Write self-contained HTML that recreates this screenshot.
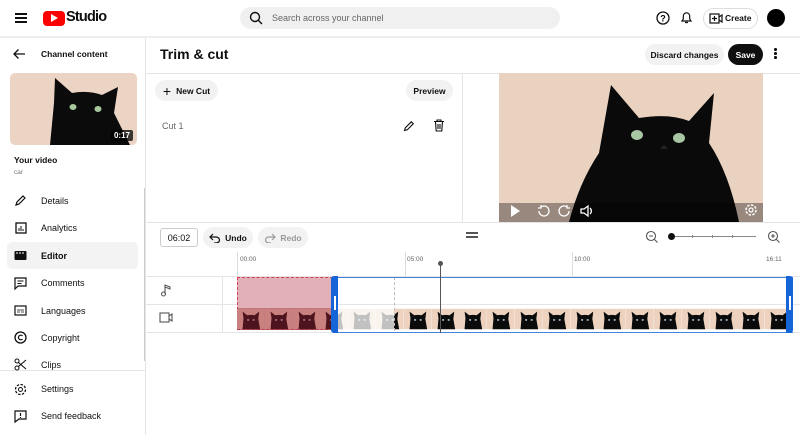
<!DOCTYPE html>
<html><head><style>
*{margin:0;padding:0;box-sizing:border-box}
body{width:800px;height:435px;overflow:hidden;background:#fff;font-family:"Liberation Sans",Arial,sans-serif;color:#0f0f0f;position:relative}
.a{position:absolute}
.t{font-size:9px}
.b{font-weight:bold}
.pill{position:absolute;border-radius:14px;background:#f2f2f2;font-size:8.5px;font-weight:bold;display:flex;align-items:center;justify-content:center}
.nav{position:absolute;left:14px;font-size:9px;display:flex;align-items:center}
.nav span{position:absolute;left:27px;top:0;white-space:nowrap}
</style></head><body>
<svg width="0" height="0" style="position:absolute"><defs>
<symbol id="cat" viewBox="0 0 30 22"><rect width="30" height="22" fill="#ecd2bf"/><path d="M6 22 L7 10 L6 3 L11 7 Q15 6 19 7 L24 3 L23 11 L25 22Z" fill="#0b0b0b"/><circle cx="12" cy="12" r="1.2" fill="#9ab"/><circle cx="18" cy="12" r="1.2" fill="#9ab"/></symbol>
</defs></svg>

<!-- header -->
<div class="a" style="left:15px;top:13px;width:12px;height:2px;background:#0f0f0f;box-shadow:0 4px 0 #0f0f0f,0 8px 0 #0f0f0f"></div>
<div class="a" style="left:43px;top:11px;width:22px;height:15px;background:#f00;border-radius:4px"></div>
<div class="a" style="left:51px;top:14px;width:0;height:0;border-left:7px solid #fff;border-top:4.5px solid transparent;border-bottom:4.5px solid transparent"></div>
<div class="a b" style="left:66px;top:9px;font-size:14.5px;letter-spacing:-0.8px">Studio</div>
<div class="a" style="left:240px;top:7px;width:320px;height:22px;background:#f0f0f0;border-radius:11px"></div>
<svg class="a" style="left:249px;top:11px" width="14" height="14" viewBox="0 0 14 14"><circle cx="6" cy="6" r="4.5" fill="none" stroke="#0f0f0f" stroke-width="1.4"/><path d="M9.3 9.3L13 13" stroke="#0f0f0f" stroke-width="1.4"/></svg>
<div class="a t" style="left:272px;top:13px;color:#666">Search across your channel</div>
<svg class="a" style="left:656px;top:11px" width="14" height="14"><circle cx="7" cy="7" r="6" fill="none" stroke="#0f0f0f" stroke-width="1.3"/><text x="4.3" y="10.5" font-size="9" font-weight="bold" font-family="Liberation Sans">?</text></svg>
<svg class="a" style="left:680px;top:10px" width="13" height="15"><path d="M2 11h9l-1.3-2V6a3.2 3.2 0 0 0-6.4 0v3Z M5 12.5h3" fill="none" stroke="#0f0f0f" stroke-width="1.2"/></svg>
<div class="a" style="left:703px;top:8px;width:55px;height:21px;border:1px solid #ddd;border-radius:11px"></div>
<svg class="a" style="left:709px;top:13px" width="14" height="11"><rect x="1" y="1" width="9" height="9" fill="none" stroke="#0f0f0f" stroke-width="1.2"/><path d="M10 4l3-2v7l-3-2" fill="none" stroke="#0f0f0f" stroke-width="1.2"/><path d="M5.5 3v5M3 5.5h5" stroke="#0f0f0f" stroke-width="1.2"/></svg>
<div class="a b" style="left:725px;top:13px;font-size:8.5px">Create</div>
<div class="a" style="left:767px;top:9px;width:18px;height:18px;border-radius:50%;background:#000"></div>
<div class="a" style="left:0;top:36px;width:800px;height:2px;background:#eee"></div>

<!-- sidebar -->
<svg class="a" style="left:12px;top:48px" width="14" height="12"><path d="M13 6H2M6.5 1.5L2 6l4.5 4.5" fill="none" stroke="#0f0f0f" stroke-width="1.3"/></svg>
<div class="a b" style="left:41px;top:49px;font-size:8.5px">Channel content</div>
<div class="a" style="left:10px;top:73px;width:127px;height:72px;border-radius:5px;overflow:hidden;background:#ecd4c4">
 <svg width="127" height="72" viewBox="0 0 127 72"><path d="M40 72 L44 30 L45 5 L62 20 Q78 17 92 22 L108 14 L104 40 L120 72Z" fill="#0b0b0b"/><ellipse cx="63" cy="34" rx="3.5" ry="3" fill="#a9c79d"/><ellipse cx="88" cy="36" rx="3.5" ry="3" fill="#a9c79d"/></svg>
 <div class="a b" style="right:4px;bottom:4px;background:rgba(0,0,0,.75);color:#fff;font-size:8px;padding:1px 3px;border-radius:2px">0:17</div>
</div>
<div class="a b" style="left:14px;top:155px;font-size:8.5px">Your video</div>
<div class="a" style="left:14px;top:169px;font-size:6.5px;color:#777">car</div>
<div class="a" style="left:7px;top:242px;width:131px;height:27px;background:#f3f3f3;border-radius:5px"></div>
<div class="a" style="left:144px;top:188px;width:2px;height:173px;background:#ccc"></div>
<div class="a" style="left:145px;top:38px;width:1px;height:397px;background:#e5e5e5"></div>
<div class="a" style="left:0;top:370px;width:145px;height:1px;background:#e5e5e5"></div>

<svg class="a" style="left:14px;top:194px" width="13" height="13"><path d="M2 11l1-3 6-6 2 2-6 6z" fill="none" stroke="#0f0f0f" stroke-width="1.2"/></svg>
<div class="nav" style="top:196px"><span>Details</span></div>
<svg class="a" style="left:15px;top:222px" width="12" height="12"><rect x="1" y="1" width="10" height="10" fill="none" stroke="#0f0f0f" stroke-width="1.3"/><path d="M4 9V6M6 9V4M8 9V7" stroke="#0f0f0f"/></svg>
<div class="nav" style="top:223px"><span>Analytics</span></div>
<svg class="a" style="left:14px;top:250px" width="13" height="11"><rect x="0.5" y="1" width="12" height="9" fill="#0f0f0f" rx="1"/><path d="M2 3h2M5 3h2M8 3h2" stroke="#fff"/></svg>
<div class="nav" style="top:251px"><span class="b">Editor</span></div>
<svg class="a" style="left:14px;top:277px" width="13" height="13"><path d="M1 1h11v8H4l-3 3z" fill="none" stroke="#0f0f0f" stroke-width="1.2"/><path d="M3.5 4h6M3.5 6.5h4" stroke="#0f0f0f"/></svg>
<div class="nav" style="top:278px"><span>Comments</span></div>
<svg class="a" style="left:14px;top:305px" width="13" height="11"><rect x="1" y="1" width="11" height="9" fill="none" stroke="#0f0f0f" stroke-width="1.2"/><path d="M3 7h3M7 7h3M3 5h7" stroke="#0f0f0f" stroke-width=".8"/></svg>
<div class="nav" style="top:306px"><span>Languages</span></div>
<svg class="a" style="left:14px;top:331px" width="13" height="13"><circle cx="6.5" cy="6.5" r="5.5" fill="none" stroke="#0f0f0f" stroke-width="1.3"/><path d="M8.5 5a2.3 2.3 0 1 0 0 3" fill="none" stroke="#0f0f0f" stroke-width="1.2"/></svg>
<div class="nav" style="top:333px"><span>Copyright</span></div>
<svg class="a" style="left:14px;top:358px" width="13" height="13"><circle cx="3" cy="3" r="2" fill="none" stroke="#0f0f0f"/><circle cx="3" cy="10" r="2" fill="none" stroke="#0f0f0f"/><path d="M4.5 4.5L12 11M4.5 8.5L12 2" stroke="#0f0f0f" stroke-width="1.1"/></svg>
<div class="nav" style="top:360px"><span>Clips</span></div>
<svg class="a" style="left:14px;top:383px" width="13" height="13"><circle cx="6.5" cy="6.5" r="2" fill="none" stroke="#0f0f0f"/><circle cx="6.5" cy="6.5" r="5" fill="none" stroke="#0f0f0f" stroke-width="1.3" stroke-dasharray="2.5 1.4"/></svg>
<div class="nav" style="top:384px"><span>Settings</span></div>
<svg class="a" style="left:14px;top:410px" width="13" height="13"><path d="M1 1h11v8H5l-4 3z" fill="none" stroke="#0f0f0f" stroke-width="1.2"/><path d="M6.5 3v3M6.5 7v1" stroke="#0f0f0f" stroke-width="1.2"/></svg>
<div class="nav" style="top:411px"><span>Send feedback</span></div>

<!-- title row -->
<div class="a b" style="left:160px;top:46px;font-size:14px">Trim &amp; cut</div>
<div class="pill" style="left:645px;top:44px;width:79px;height:21px;font-weight:bold">Discard changes</div>
<div class="pill" style="left:728px;top:44px;width:35px;height:21px;background:#0f0f0f;color:#fff">Save</div>
<div class="a" style="left:774px;top:48px;width:2.5px;height:2.5px;background:#0f0f0f;border-radius:50%;box-shadow:0 4px 0 #0f0f0f,0 8px 0 #0f0f0f"></div>
<div class="a" style="left:146px;top:73px;width:654px;height:1px;background:#e5e5e5"></div>

<!-- left panel -->
<div class="pill" style="left:155px;top:80px;width:63px;height:21px"><span style="font-size:14px;font-weight:normal;margin-right:5px">+</span>New Cut</div>
<div class="pill" style="left:406px;top:80px;width:47px;height:21px">Preview</div>
<div class="a t" style="left:162px;top:121px;color:#666">Cut 1</div>
<svg class="a" style="left:403px;top:120px" width="12" height="12"><path d="M1.5 10.5l.8-2.7 6-6 2 2-6 6z" fill="none" stroke="#0f0f0f" stroke-width="1.1"/></svg>
<svg class="a" style="left:433px;top:119px" width="12" height="13"><path d="M1 2.5h10M4 2.5V1h4v1.5M2.5 2.5l.7 9.5h5.6l.7-9.5M5 5v5M7 5v5" fill="none" stroke="#0f0f0f" stroke-width="1.1"/></svg>
<div class="a" style="left:462px;top:74px;width:1px;height:149px;background:#e5e5e5"></div>

<!-- video -->
<div class="a" style="left:499px;top:73px;width:264px;height:149px;background:#ead2c0;overflow:hidden">
 <svg width="264" height="149" viewBox="0 0 264 149"><path d="M70 149 Q80 110 100 80 L112 12 L140 45 Q170 40 190 48 L215 20 L210 70 Q230 100 240 149Z" fill="#0a0a0a"/><ellipse cx="138" cy="62" rx="6" ry="5" fill="#a8c6a4"/><ellipse cx="180" cy="65" rx="6" ry="5" fill="#a8c6a4"/><path d="M165 72l-4 4h8z" fill="#222"/><path d="M0 130h264v19H0z" fill="rgba(0,0,0,.35)"/></svg>
 <svg class="a" style="left:10px;top:131px" width="96" height="14"><path d="M2 1l9 6-9 6z" fill="#fff"/><path d="M30 7a5 5 0 1 0 2-4M32 1v3h-3" fill="none" stroke="#fff" stroke-width="1.3"/><path d="M60 7a5 5 0 1 1-2-4M58 1v3h3" fill="none" stroke="#fff" stroke-width="1.3"/><path d="M72 5h3l4-3v10l-4-3h-3z M81 4a4 4 0 0 1 0 6" fill="none" stroke="#fff" stroke-width="1.3"/></svg>
 <svg class="a" style="left:245px;top:130px" width="14" height="14"><circle cx="7" cy="7" r="2" fill="none" stroke="#fff" stroke-width="1.2"/><circle cx="7" cy="7" r="5" fill="none" stroke="#fff" stroke-width="1.5" stroke-dasharray="2.5 1.4"/></svg>
</div>
<div class="a" style="left:146px;top:222px;width:654px;height:1px;background:#e5e5e5"></div>

<!-- timeline controls -->
<div class="a t" style="left:160px;top:228px;width:38px;height:19px;border:1px solid #ccc;border-radius:3px;display:flex;align-items:center;justify-content:center">06:02</div>
<div class="pill" style="left:203px;top:227px;width:50px;height:21px"><svg width="12" height="10" style="margin-right:4px"><path d="M4 1L1 4l3 3M1 4h6a3.5 3 0 0 1 0 6H5" fill="none" stroke="#0f0f0f" stroke-width="1.2"/></svg>Undo</div>
<div class="pill" style="left:258px;top:227px;width:50px;height:21px;color:#999"><svg width="12" height="10" style="margin-right:4px"><path d="M8 1l3 3-3 3M11 4H5a3.5 3 0 0 0 0 6h2" fill="none" stroke="#999" stroke-width="1.2"/></svg>Redo</div>
<div class="a" style="left:466px;top:232px;width:12px;height:1.5px;background:#555;box-shadow:0 4px 0 #555"></div>
<svg class="a" style="left:645px;top:230px" width="14" height="14"><circle cx="6" cy="6" r="4.5" fill="none" stroke="#555" stroke-width="1.1"/><path d="M4 6h4M9.5 9.5l3 3" stroke="#555" stroke-width="1.1"/></svg>
<div class="a" style="left:672px;top:236px;width:84px;height:1px;background:#888"></div>
<div class="a" style="left:692px;top:235px;width:1px;height:3px;background:#888;box-shadow:20px 0 0 #888,40px 0 0 #888"></div>
<div class="a" style="left:668px;top:233px;width:7px;height:7px;border-radius:50%;background:#0f0f0f"></div>
<svg class="a" style="left:767px;top:230px" width="14" height="14"><circle cx="6" cy="6" r="4.5" fill="none" stroke="#555" stroke-width="1.1"/><path d="M4 6h4M6 4v4M9.5 9.5l3 3" stroke="#555" stroke-width="1.1"/></svg>

<!-- ruler -->
<div class="a" style="left:237px;top:252px;width:1px;height:24px;background:#ddd"></div>
<div class="a" style="left:405px;top:252px;width:1px;height:24px;background:#ddd"></div>
<div class="a" style="left:572px;top:252px;width:1px;height:24px;background:#ddd"></div>
<div class="a" style="left:240px;top:256px;font-size:6.5px;color:#666">00:00</div>
<div class="a" style="left:407px;top:256px;font-size:6.5px;color:#666">05:00</div>
<div class="a" style="left:574px;top:256px;font-size:6.5px;color:#666">10:00</div>
<div class="a" style="left:766px;top:256px;font-size:6.5px;color:#666">16:11</div>
<div class="a" style="left:146px;top:276px;width:654px;height:1px;background:#e5e5e5"></div>
<div class="a" style="left:146px;top:304px;width:654px;height:1px;background:#e5e5e5"></div>
<div class="a" style="left:146px;top:332px;width:654px;height:1px;background:#e5e5e5"></div>
<div class="a" style="left:222px;top:277px;width:1px;height:55px;background:#e5e5e5"></div>
<svg class="a" style="left:160px;top:283px" width="12" height="14"><path d="M5 11V2l5 2v2l-5-2" fill="none" stroke="#555" stroke-width="1.1"/><circle cx="3.5" cy="11" r="2" fill="none" stroke="#555" stroke-width="1.1"/></svg>
<svg class="a" style="left:159px;top:312px" width="15" height="11"><rect x="1" y="1" width="9" height="9" fill="none" stroke="#555" stroke-width="1.1"/><path d="M10 4l3-2v7l-3-2" fill="none" stroke="#555" stroke-width="1.1"/></svg>

<!-- tracks -->
<div class="a" style="left:237px;top:277px;width:96px;height:53px;background:#e1b0b8;border:1px dashed #d04050"></div>
<div class="a" style="left:237px;top:308px;width:556px;height:22px;display:flex;overflow:hidden">
<svg width="29" height="22"><use href="#cat"/></svg><svg width="29" height="22"><use href="#cat"/></svg><svg width="29" height="22"><use href="#cat"/></svg><svg width="29" height="22"><use href="#cat"/></svg><svg width="29" height="22"><use href="#cat"/></svg><svg width="29" height="22"><use href="#cat"/></svg><svg width="29" height="22"><use href="#cat"/></svg><svg width="29" height="22"><use href="#cat"/></svg><svg width="29" height="22"><use href="#cat"/></svg><svg width="29" height="22"><use href="#cat"/></svg><svg width="29" height="22"><use href="#cat"/></svg><svg width="29" height="22"><use href="#cat"/></svg><svg width="29" height="22"><use href="#cat"/></svg><svg width="29" height="22"><use href="#cat"/></svg><svg width="29" height="22"><use href="#cat"/></svg><svg width="29" height="22"><use href="#cat"/></svg><svg width="29" height="22"><use href="#cat"/></svg><svg width="29" height="22"><use href="#cat"/></svg><svg width="29" height="22"><use href="#cat"/></svg><svg width="29" height="22"><use href="#cat"/></svg>
</div>
<div class="a" style="left:237px;top:308px;width:96px;height:22px;background:rgba(160,30,50,.45)"></div>
<div class="a" style="left:338px;top:308px;width:56px;height:22px;background:rgba(255,255,255,.75)"></div>
<div class="a" style="left:394px;top:277px;width:0;height:54px;border-left:1px dashed #bbb"></div>
<div class="a" style="left:333px;top:277px;width:460px;height:56px;border:1.5px solid #3f84e0;border-left:none;border-right:none"></div>
<div class="a" style="left:331px;top:276px;width:7px;height:57px;background:#1565d8;border-radius:3px 0 0 3px"></div>
<div class="a" style="left:334px;top:296px;width:1.5px;height:14px;background:#fff"></div>
<div class="a" style="left:786px;top:276px;width:7px;height:57px;background:#1565d8;border-radius:0 3px 3px 0"></div>
<div class="a" style="left:789px;top:296px;width:1.5px;height:14px;background:#fff"></div>
<div class="a" style="left:440px;top:263px;width:1px;height:70px;background:#555"></div>
<div class="a" style="left:438px;top:261px;width:5px;height:5px;border-radius:50%;background:#555"></div>
</body></html>
